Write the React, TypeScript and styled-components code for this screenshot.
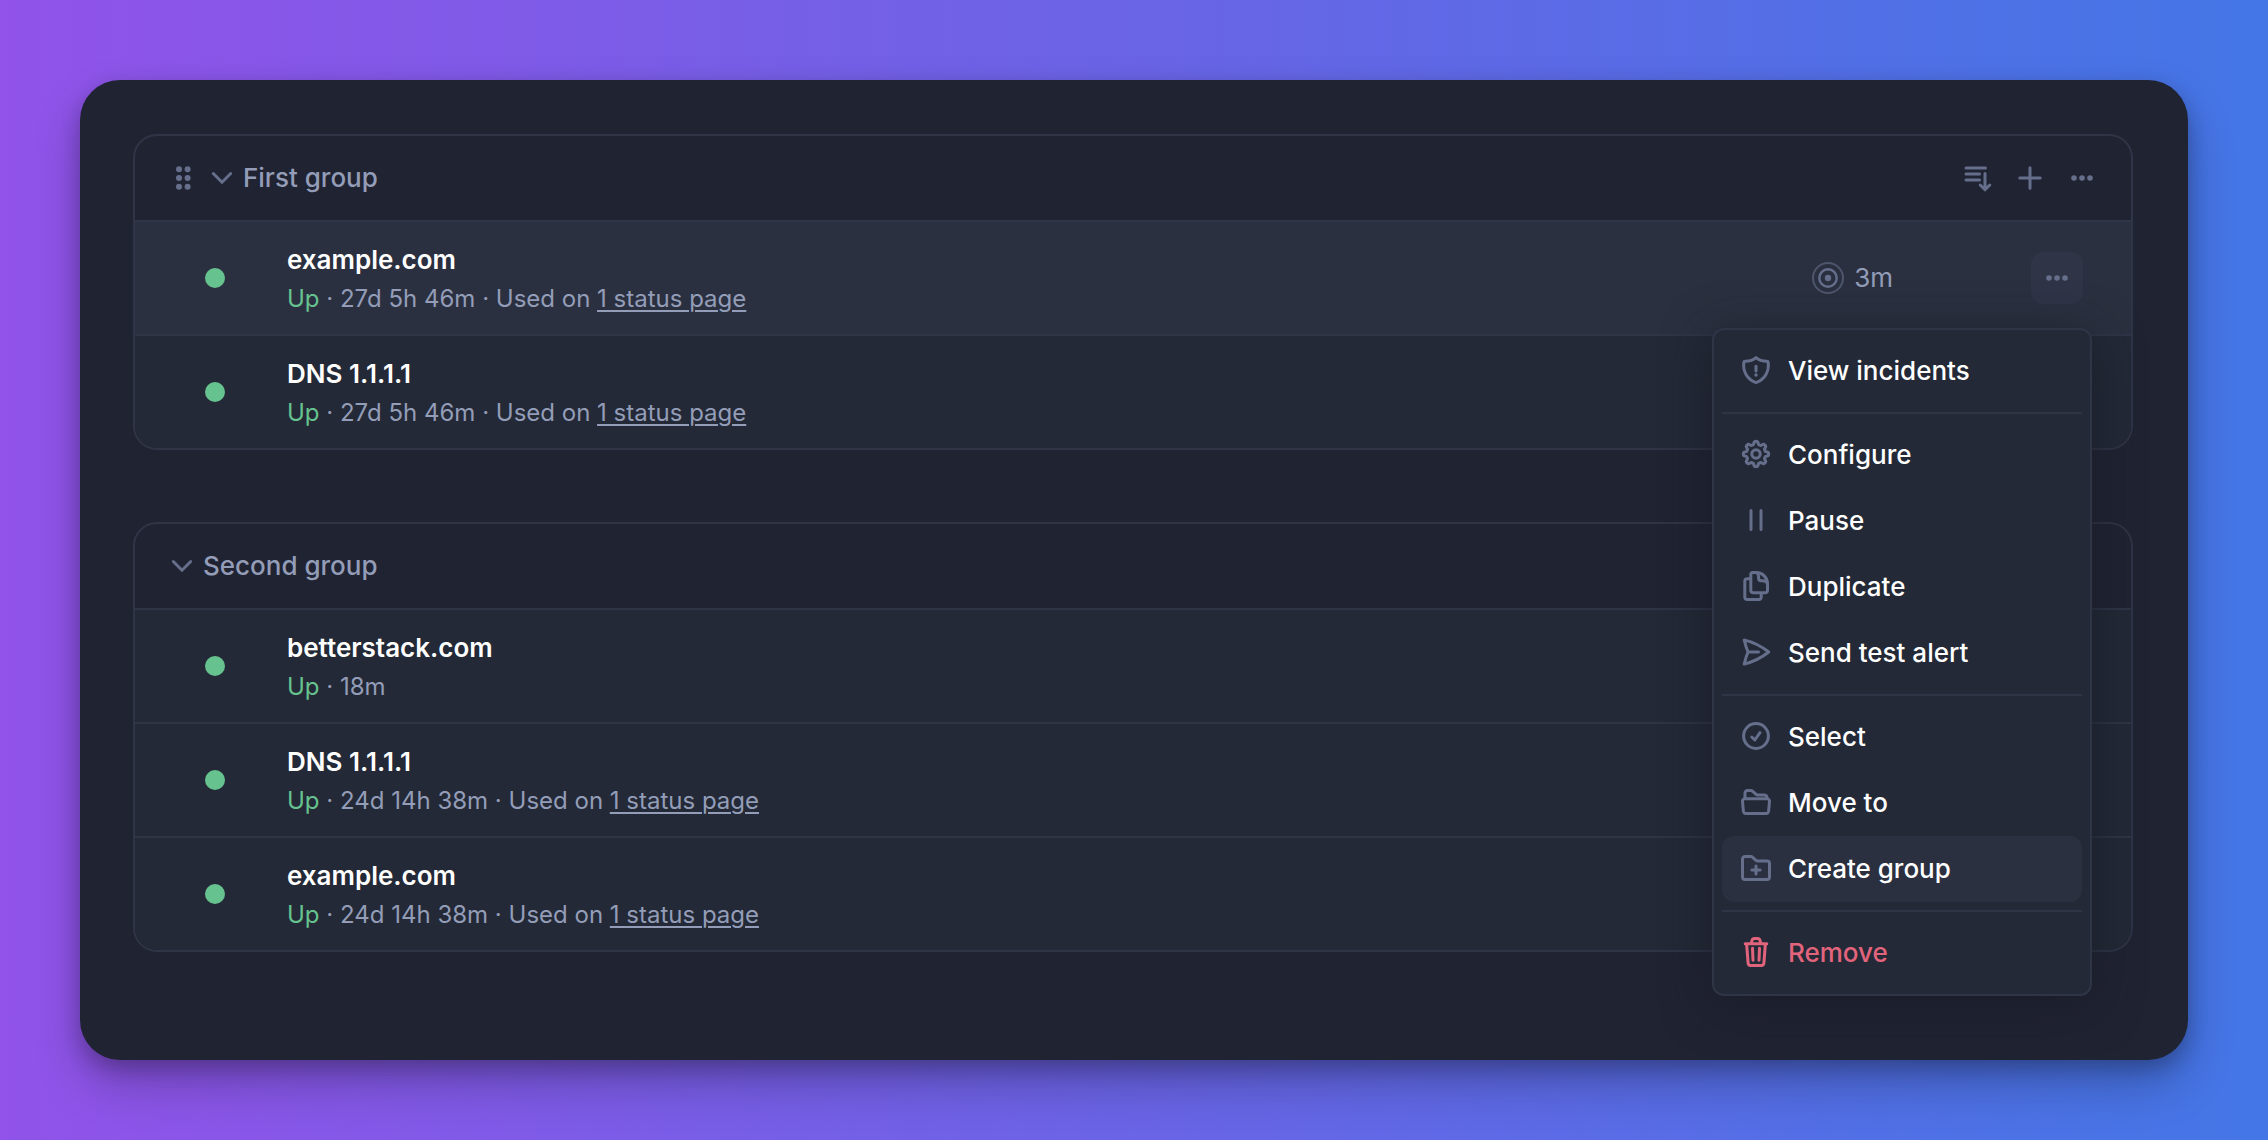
import React from "react";
import styled, { createGlobalStyle, css } from "styled-components";

const color = {
  card: "#202332",
  row: "#232936",
  active: "#2b3040",
  line: "#2f3446",
  muted: "#939db8",
  icon: "#656f8b",
  green: "#66c28e",
  red: "#e2647c",
};

const GlobalStyle = createGlobalStyle`
  *, *::before, *::after { box-sizing: border-box; }
  body { margin: 0; }
  button { font: inherit; color: inherit; border: 0; padding: 0; background: none; cursor: pointer; }
`;

const Page = styled.main`
  min-height: 100vh;
  padding: 80px;
  background: linear-gradient(90deg, #9153e9 0%, #6a64e6 50%, #4476e6 100%);
  color: #fff;
  font-family: Inter, "Liberation Sans", sans-serif;
  font-size: 26px;
  line-height: 36px;
`;

const Card = styled.section`
  display: flex;
  flex-direction: column;
  gap: 72px;
  padding: 54px 55px 108px 53px;
  border-radius: 40px;
  background: ${color.card};
  box-shadow:
    0 8px 20px rgba(0, 0, 0, 0.22),
    0 24px 48px rgba(0, 0, 0, 0.24);
`;

const Group = styled.section`
  border: 2px solid ${color.line};
  border-radius: 24px;
`;

const GroupHeader = styled.header`
  display: flex;
  align-items: center;
  height: 84px;
  padding: 0 23px 0 35px;
`;

const Handle = styled.button`
  display: flex;
  justify-content: center;
  width: 28px;
  margin-right: 12px;
`;

const Toggle = styled.button`
  display: flex;
  align-items: center;
  gap: 9px;
  color: ${color.muted};
  font-weight: 500;
`;

const GroupName = styled.h2`
  margin: 0;
  font: inherit;
`;

const Actions = styled.div`
  display: flex;
  margin-left: auto;
`;

const IconButton = styled.button<{ $filled?: boolean }>`
  display: grid;
  place-items: center;
  width: 52px;
  height: 52px;
  border-radius: 12px;
  ${(p) => p.$filled && css`background: #2f3447;`}
`;

const List = styled.ul`
  margin: 0;
  padding: 0;
  list-style: none;
`;

const Row = styled.li<{ $active?: boolean }>`
  position: relative;
  display: flex;
  align-items: center;
  height: 114px;
  padding: 0 48px 0 70px;
  border-top: 2px solid ${color.line};
  background: ${(p) => (p.$active ? color.active : color.row)};

  &:last-child {
    border-radius: 0 0 22px 22px;
  }
`;

const Dot = styled.span`
  width: 20px;
  height: 20px;
  margin-right: 62px;
  border-radius: 50%;
  background: ${color.green};
`;

const Name = styled.h3`
  margin: 0;
  font-size: 26px;
  line-height: 42px;
  font-weight: 600;
`;

const Meta = styled.p`
  margin: 0;
  color: ${color.muted};
  font-size: 24px;
  line-height: 36px;
`;

const Up = styled.span`
  color: ${color.green};
`;

const StatusLink = styled.a`
  color: inherit;
  text-decoration: underline;
  text-decoration-thickness: 2px;
  text-underline-offset: 3px;
`;

const Frequency = styled.div`
  display: flex;
  align-items: center;
  gap: 10px;
  margin: 0 138px 0 auto;
  color: ${color.muted};
`;

const Menu = styled.div`
  position: absolute;
  z-index: 2;
  top: 106px;
  right: 39px;
  width: 380px;
  padding: 8px;
  border: 2px solid ${color.line};
  border-radius: 12px;
  background: ${color.row};
  box-shadow: 0 8px 48px rgba(24, 27, 38, 0.75);
`;

const MenuItem = styled.button<{ $active?: boolean; $danger?: boolean }>`
  display: flex;
  align-items: center;
  gap: 16px;
  width: 100%;
  height: 66px;
  padding: 0 18px;
  border-radius: 12px;
  color: ${(p) => (p.$danger ? color.red : "#fff")};
  font-weight: 500;
  background: ${(p) => (p.$active ? color.active : "transparent")};
`;

const Divider = styled.hr`
  height: 2px;
  margin: 8px 0;
  border: 0;
  background: ${color.line};
`;

const Svg = styled.svg<{ $tint?: string }>`
  display: block;
  flex: none;
  fill: none;
  stroke: ${(p) => p.$tint ?? color.icon};
  stroke-width: 3;
  stroke-linecap: round;
  stroke-linejoin: round;

  .solid {
    fill: ${(p) => p.$tint ?? color.icon};
    stroke: none;
  }

  .halo {
    stroke-width: 2;
    opacity: 0.6;
  }
`;

type IconProps = { size?: number; top?: number; tint?: string; children: React.ReactNode };

const Icon = ({ size = 32, top = 0, tint, children }: IconProps) => (
  <Svg $tint={tint} width={size} height={size} viewBox={`0 ${top} ${size} ${size}`} aria-hidden="true">
    {children}
  </Svg>
);

const Dots = () => (
  <Icon>
    {[8, 16, 24].map((x) => (
      <circle key={x} className="solid" cx={x} cy="16" r="2.8" />
    ))}
  </Icon>
);

const Grip = () => (
  <Icon size={24}>
    {[7, 15.6].flatMap((x) =>
      [3.3, 12, 20.7].map((y) => <circle key={`${x}-${y}`} className="solid" cx={x} cy={y} r="3" />),
    )}
  </Icon>
);

const Chevron = () => (
  <Icon size={24}>
    <path d="M3.3 7.5 12 16.3l8.700-8.800" />
  </Icon>
);

const SortDown = () => (
  <Icon>
    <path d="M4 6h19.500M4 12h13.500M4 18h13.500M23 11.500v15.500M18.200 23l4.800 4.800 4.800-4.800" />
  </Icon>
);

const Plus = () => (
  <Icon>
    <path d="M16 5.800v20.400M5.800 16h20.400" />
  </Icon>
);

const Target = () => (
  <Icon>
    <circle className="halo" cx="16" cy="16" r="15" />
    <circle cx="16" cy="16" r="8.700" strokeWidth="2.400" />
    <circle className="solid" cx="16" cy="16" r="3.200" />
  </Icon>
);

const gearOutline =
  Array.from({ length: 96 }, (_, i) => {
    const a = (i / 96) * Math.PI * 2;
    const r = 11.1 + 1.6 * Math.tanh(2 * Math.cos(8 * a));
    return `${i ? "L" : "M"}${(16 + r * Math.sin(a)).toFixed(2)} ${(16 - r * Math.cos(a)).toFixed(2)}`;
  }).join("") + "Z";

const icons = {
  shield: (
    <>
      <path d="M16 3.600C13.300 6 9.500 7.300 5.200 7.300c-.9 0-1.300.5-1.400 1.200C2.800 17.500 7 25.300 16 28.600 25 25.300 29.200 17.500 28.200 8.500c-.1-.7-.5-1.200-1.400-1.200C22.500 7.300 18.700 6 16 3.600Z" />
      <path d="M16 12.300v4.600" />
      <circle className="solid" cx="16" cy="21" r="1.700" />
    </>
  ),
  gear: (
    <>
      <path d={gearOutline} />
      <circle cx="16" cy="16" r="4.200" />
    </>
  ),
  pause: <path d="M11 6.500v19M21 6.500v19" />,
  copy: (
    <>
      <path d="M12.800 2.600h3.400c6.500 0 11.300 5 11.300 11.400v6.400a2.400 2.400 0 0 1-2.400 2.400H13.200a2.400 2.400 0 0 1-2.400-2.400V4.600a2 2 0 0 1 2-2Z" />
      <path d="M17 2.800c1.100 1 1.600 2.400 1.600 4v1.500a2.400 2.400 0 0 0 2.400 2.400h1.800c1.900 0 3.400.7 4.500 2.300" />
      <path d="M10.500 8.800H7.200a2.400 2.400 0 0 0-2.400 2.400v15.900a2.400 2.400 0 0 0 2.400 2.400h11.600a2.400 2.400 0 0 0 2.400-2.400V23.500" />
    </>
  ),
  send: <path d="M4.200 3.900C13.500 6.300 21.500 10.300 28.800 16 21.500 21.700 13.500 25.700 4.200 28.100 5.200 24 6.300 20 8 16 6.300 12 5.200 8 4.200 3.900ZM8 16h10.500" />,
  select: (
    <>
      <circle cx="16" cy="16" r="12.400" />
      <path d="M11.800 17l3 3 5.200-7.300" />
    </>
  ),
  folder: (
    <>
      <path d="M4.600 12.800h22.800a2.300 2.300 0 0 1 2.100 2.500l-.9 9.900a2.600 2.600 0 0 1-2.600 2.300H6a2.600 2.600 0 0 1-2.600-2.300l-.9-9.900a2.300 2.300 0 0 1 2.100-2.500Z" />
      <path d="M5 12.500V7a2.500 2.500 0 0 1 2.500-2.500h3.200c.8 0 1.500.3 2.100.9l3 2.700c.5.500 1.100.8 1.900.8h6.300c1.700 0 2.900 1 3 2.600v1" />
    </>
  ),
  folderPlus: (
    <>
      <path d="M2.500 7a2.500 2.500 0 0 1 2.500-2.500h5.700c.8 0 1.500.3 2 .8l3.200 3c.5.500 1.100.8 1.900.8h9.200a2.500 2.500 0 0 1 2.500 2.500V25a2.500 2.500 0 0 1-2.500 2.500H5A2.500 2.500 0 0 1 2.500 25Z" />
      <path d="M16 13.900v8.200M11.900 18h8.200" />
    </>
  ),
  trash: (
    <>
      <path d="M5.200 7.700h21.600M6.600 7.700l1.500 19.500a2.500 2.500 0 0 0 2.500 2.300h10.800a2.500 2.500 0 0 0 2.500-2.300l1.500-19.500" />
      <path d="M11.300 7.500l.6-2.700c.3-1.400 1.300-2.300 2.700-2.300h2.800c1.400 0 2.400.9 2.700 2.300l.6 2.700M12.500 12.200l.5 12M19.500 12.200l-.5 12" />
    </>
  ),
};

type Item = { label: string; icon: keyof typeof icons; active?: boolean; danger?: boolean };

const menuSections: Item[][] = [
  [{ label: "View incidents", icon: "shield" }],
  [
    { label: "Configure", icon: "gear" },
    { label: "Pause", icon: "pause" },
    { label: "Duplicate", icon: "copy" },
    { label: "Send test alert", icon: "send" },
  ],
  [
    { label: "Select", icon: "select" },
    { label: "Move to", icon: "folder" },
    { label: "Create group", icon: "folderPlus", active: true },
  ],
  [{ label: "Remove", icon: "trash", danger: true }],
];

const MonitorMenu = () => (
  <Menu role="menu">
    {menuSections.map((section, i) => (
      <React.Fragment key={section[0].label}>
        {i > 0 && <Divider />}
        {section.map((item) => (
          <MenuItem key={item.label} type="button" role="menuitem" $active={item.active} $danger={item.danger}>
            <Icon top={1} tint={item.danger ? color.red : undefined}>
              {icons[item.icon]}
            </Icon>
            {item.label}
          </MenuItem>
        ))}
      </React.Fragment>
    ))}
  </Menu>
);

type Monitor = { name: string; uptime: string; page?: boolean; every?: string };

const MonitorRow = ({ name, uptime, page, every }: Monitor) => (
  <Row $active={Boolean(every)}>
    <Dot />
    <div>
      <Name>{name}</Name>
      <Meta>
        <Up>Up</Up> · {uptime}
        {page && (
          <>
            {" · Used on "}
            <StatusLink href="#status">1 status page</StatusLink>
          </>
        )}
      </Meta>
    </div>
    {every && (
      <>
        <Frequency>
          <Target />
          {every}
        </Frequency>
        <IconButton type="button" $filled aria-label="Monitor options">
          <Dots />
        </IconButton>
        <MonitorMenu />
      </>
    )}
  </Row>
);

type GroupData = { name: string; tools?: boolean; monitors: Monitor[] };

const groups: GroupData[] = [
  {
    name: "First group",
    tools: true,
    monitors: [
      { name: "example.com", uptime: "27d 5h 46m", page: true, every: "3m" },
      { name: "DNS 1.1.1.1", uptime: "27d 5h 46m", page: true },
    ],
  },
  {
    name: "Second group",
    monitors: [
      { name: "betterstack.com", uptime: "18m" },
      { name: "DNS 1.1.1.1", uptime: "24d 14h 38m", page: true },
      { name: "example.com", uptime: "24d 14h 38m", page: true },
    ],
  },
];

export default function App() {
  return (
    <>
      <GlobalStyle />
      <Page>
        <Card>
          {groups.map((group) => (
            <Group key={group.name}>
              <GroupHeader>
                {group.tools && (
                  <Handle type="button" aria-label="Reorder group">
                    <Grip />
                  </Handle>
                )}
                <Toggle type="button" aria-expanded="true">
                  <Chevron />
                  <GroupName>{group.name}</GroupName>
                </Toggle>
                {group.tools && (
                  <Actions>
                    <IconButton type="button" aria-label="Sort monitors">
                      <SortDown />
                    </IconButton>
                    <IconButton type="button" aria-label="Add monitor">
                      <Plus />
                    </IconButton>
                    <IconButton type="button" aria-label="Group options">
                      <Dots />
                    </IconButton>
                  </Actions>
                )}
              </GroupHeader>
              <List>
                {group.monitors.map((monitor) => (
                  <MonitorRow key={monitor.name} {...monitor} />
                ))}
              </List>
            </Group>
          ))}
        </Card>
      </Page>
    </>
  );
}
